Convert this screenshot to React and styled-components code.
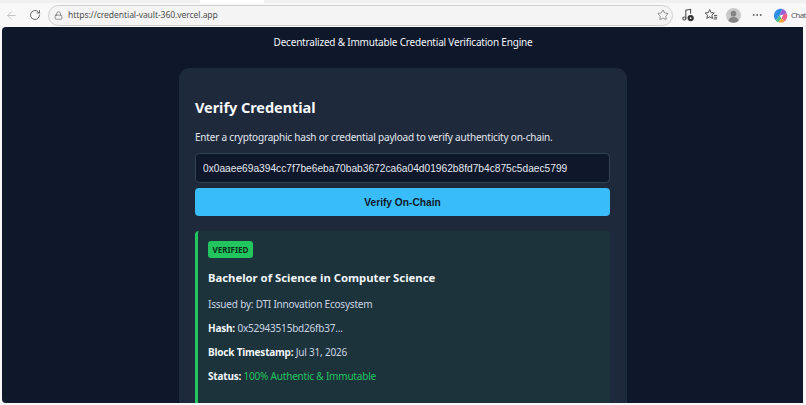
import React from 'react';
import styled, { createGlobalStyle } from 'styled-components';
import { ArrowLeft, RotateCw, Lock, Star, MoreHorizontal } from 'lucide-react';

const GlobalStyle = createGlobalStyle`
  html, body {
    margin: 0;
    width: 806px;
    height: 405px;
    overflow: hidden;
    background: #f7f7f7;
  }
  * {
    box-sizing: border-box;
  }
`;

const Window = styled.div`
  width: 806px;
  height: 405px;
  display: flex;
  flex-direction: column;
  font-family: "Noto Sans", sans-serif;
`;

const TabStrip = styled.div`
  height: 3px;
  flex: none;
  display: flex;
  background: #f0f0f0;
`;

const ActiveTab = styled.div`
  width: 64px;
  margin-left: 200px;
  background: #fff;
`;

const Toolbar = styled.div`
  height: 24px;
  flex: none;
  display: flex;
  align-items: center;
  overflow: hidden;
  background: #f8f8f8;
  color: #4a4a4a;
`;

const NavButton = styled.div`
  width: 23px;
  flex: none;
  display: flex;
  justify-content: center;
  color: ${(p) => (p.$muted ? '#b5b5b5' : '#4a4a4a')};
`;

const AddressBar = styled.div`
  flex: none;
  width: 625px;
  height: 21px;
  margin-left: 2px;
  padding: 0 3px 0 5px;
  display: flex;
  align-items: center;
  gap: 5px;
  border: 1px solid #d0d0d0;
  border-radius: 11px;
  background: #f4f4f4;
  font-size: 8.6px;
  letter-spacing: -0.1px;
  color: #505050;
`;

const Url = styled.span`
  flex: 1;
`;

const ToolIcons = styled.div`
  flex: none;
  display: flex;
  align-items: center;
  margin-left: 3px;
`;

const ToolSlot = styled.div`
  width: 23px;
  display: flex;
  justify-content: center;
  align-items: center;
`;

const Avatar = styled.svg`
  width: 15px;
  height: 15px;
`;

const ToolGlyph = styled.svg`
  width: 14px;
  height: 14px;
`;

const CopilotLogo = styled.svg`
  width: 15px;
  height: 15px;
  flex: none;
  margin-left: 5px;
`;

const ChatLabel = styled.span`
  font-size: 7.8px;
  letter-spacing: -0.5px;
  color: #555;
  margin-left: 3px;
  white-space: nowrap;
`;

const Page = styled.main`
  flex: none;
  width: 801px;
  height: 376px;
  margin-left: 2px;
  padding-left: 1px;
  overflow: hidden;
  border-radius: 4px 0 0 4px;
  background: #0f172a;
  color: #f8fafc;
  display: flex;
  flex-direction: column;
  align-items: center;
`;

const Tagline = styled.p`
  margin: 8px 0 0;
  height: 14px;
  font-size: 10px;
  line-height: 14px;
  letter-spacing: -0.2px;
  color: #f1f5f9;
`;

const Card = styled.section`
  flex: none;
  width: 448px;
  margin-top: 19px;
  padding: 28px 17px 0 16px;
  border-radius: 10px;
  background: #1e293b;
`;

const Title = styled.h2`
  margin: 0;
  font-size: 14.5px;
  line-height: 22px;
  font-weight: 700;
  letter-spacing: -0.05px;
  color: #f8fafc;
`;

const Hint = styled.p`
  margin: 12px 0 0;
  font-size: 10px;
  line-height: 15px;
  letter-spacing: -0.2px;
  color: #e2e8f0;
`;

const HashInput = styled.input`
  display: block;
  width: 100%;
  height: 30px;
  margin-top: 8px;
  padding: 0 7px;
  border: 1px solid #334155;
  border-radius: 4px;
  outline: none;
  background: #0f172a;
  color: #e2e8f0;
  font-family: "Liberation Sans", Arial, sans-serif;
  font-size: 10.2px;
`;

const VerifyButton = styled.button`
  display: block;
  width: 100%;
  height: 28px;
  margin-top: 5px;
  border: none;
  border-radius: 4px;
  background: #38bdf8;
  color: #0f172a;
  font-family: "Liberation Sans", Arial, sans-serif;
  font-size: 10.2px;
  font-weight: 700;
`;

const Result = styled.div`
  margin-top: 15px;
  padding: 10px 12px 30px 10px;
  border-left: 3px solid #22c55e;
  border-radius: 4px;
  background: #1c333c;
`;

const Badge = styled.span`
  display: block;
  width: 45px;
  height: 17px;
  border-radius: 3px;
  background: #22c55e;
  color: #052e16;
  font-size: 8px;
  line-height: 17px;
  font-weight: 700;
  text-align: center;
`;

const Degree = styled.h3`
  margin: 11px 0 9px;
  font-size: 11.3px;
  line-height: 18px;
  font-weight: 700;
  color: #f1f5f9;
`;

const Detail = styled.p`
  margin: 8px 0 0;
  height: 16px;
  font-size: 10px;
  line-height: 16px;
  letter-spacing: -0.2px;
  color: #cbd5e1;

  strong {
    color: #f1f5f9;
  }
`;

const StatusText = styled.span`
  color: #22c55e;
`;

const App = () => (
  <Window>
    <GlobalStyle />
    <TabStrip>
      <ActiveTab />
    </TabStrip>
    <Toolbar>
      <NavButton $muted>
        <ArrowLeft size={13} strokeWidth={1.4} />
      </NavButton>
      <NavButton>
        <RotateCw size={12} strokeWidth={1.6} />
      </NavButton>
      <AddressBar>
        <Lock size={9} strokeWidth={1.5} />
        <Url>https://credential-vault-360.vercel.app</Url>
        <Star size={12} strokeWidth={1.2} />
      </AddressBar>
      <ToolIcons>
        <ToolSlot>
          {/* music note with a gear badge */}
          <ToolGlyph viewBox="0 0 16 16" fill="none" stroke="#4a4a4a" strokeWidth="1.2">
            <path d="M5.500 12V2.500l5.500-1v5" />
            <circle cx="3.800" cy="12" r="1.800" />
            <circle cx="11" cy="11.500" r="3" fill="#333" stroke="#333" />
            <circle cx="11" cy="11.500" r="1" fill="#f8f8f8" stroke="none" />
          </ToolGlyph>
        </ToolSlot>
        <ToolSlot>
          {/* favourites: star with list lines */}
          <ToolGlyph viewBox="0 0 16 16" fill="none" stroke="#4a4a4a" strokeWidth="1.1">
            <path d="M6.500 1.800l1.600 3.500 3.600.4-2.700 2.500.8 3.700-3.300-1.900-3.300 1.900.8-3.700L1.300 5.700l3.600-.4z" />
            <path d="M11.500 8.500H15M11.500 10.500H15M11 12.500h4" />
          </ToolGlyph>
        </ToolSlot>
        <ToolSlot>
          <Avatar viewBox="0 0 16 16">
            <circle cx="8" cy="8" r="8" fill="#c9c9c9" />
            <circle cx="8" cy="6" r="3" fill="#858585" />
            <path d="M2.500 13.500c1-3 3-4 5.500-4s4.500 1 5.500 4a8 8 0 0 1-11 0z" fill="#858585" />
          </Avatar>
        </ToolSlot>
        <ToolSlot>
          <MoreHorizontal size={12} strokeWidth={1.6} />
        </ToolSlot>
      </ToolIcons>
      <CopilotLogo viewBox="0 0 16 16">
        <path d="M4 2C6 .5 8 .5 10 1L7 8 3 13C.5 11 0 5 4 2z" fill="#2f8fe8" />
        <path d="M10 1c2 .5 4 2 4.500 4.500L11 7 7 8z" fill="#9a5bd6" />
        <path d="M14.500 5.500c1.500 3 .5 6.500-2 8.500L9 11l2-4z" fill="#ef5f8a" />
        <path d="M12.500 14c-2 1.800-5 2-7 1L9 11z" fill="#f5a93d" />
        <path d="M5.500 15c-1 0-2-1-2.500-2l4-5 2 3z" fill="#45c08a" />
      </CopilotLogo>
      <ChatLabel>Chat</ChatLabel>
    </Toolbar>
    <Page>
      <Tagline>Decentralized &amp; Immutable Credential Verification Engine</Tagline>
      <Card>
        <Title>Verify Credential</Title>
        <Hint>Enter a cryptographic hash or credential payload to verify authenticity on-chain.</Hint>
        <HashInput readOnly value="0x0aaee69a394cc7f7be6eba70bab3672ca6a04d01962b8fd7b4c875c5daec5799" />
        <VerifyButton>Verify On-Chain</VerifyButton>
        <Result>
          <Badge>VERIFIED</Badge>
          <Degree>Bachelor of Science in Computer Science</Degree>
          <Detail>Issued by: DTI Innovation Ecosystem</Detail>
          <Detail><strong>Hash:</strong> 0x52943515bd26fb37...</Detail>
          <Detail><strong>Block Timestamp:</strong> Jul 31, 2026</Detail>
          <Detail><strong>Status:</strong> <StatusText>100% Authentic &amp; Immutable</StatusText></Detail>
        </Result>
      </Card>
    </Page>
  </Window>
);

export default App;
